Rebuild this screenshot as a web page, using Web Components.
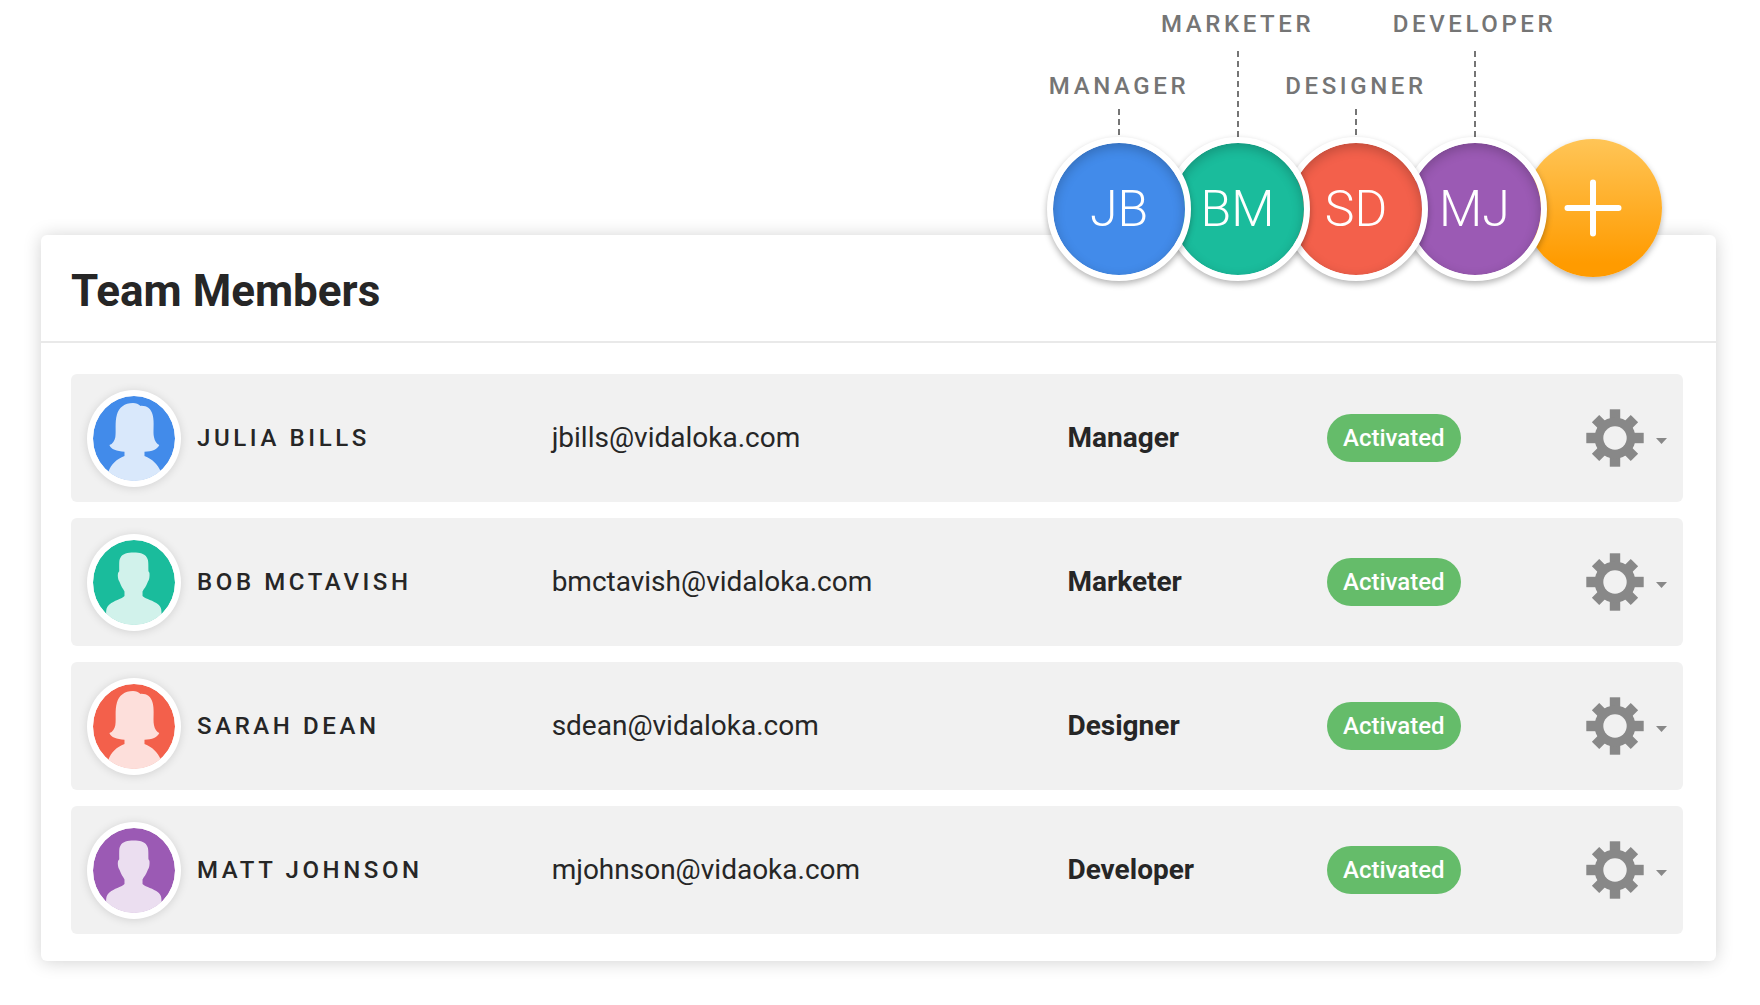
<!DOCTYPE html>
<html lang="en">
<head>
<meta charset="utf-8">
<title>Team Members</title>
<style>
  body { margin: 0; background: #fff; color: #262626; font-family: Roboto, "Liberation Sans", sans-serif; }
</style>
</head>
<body>
<team-page></team-page>

<template id="tpl-page">
  <style>
    :host { display: block; padding: 8px 44px 40px 41px; }
    header { position: relative; z-index: 1; display: flex; align-items: flex-end; justify-content: space-between; width: 592px; margin: 0 64px -46px auto; }
    role-bubble:nth-child(1) { z-index: 5; }
    role-bubble:nth-child(2) { z-index: 4; }
    role-bubble:nth-child(3) { z-index: 3; }
    role-bubble:nth-child(4) { z-index: 2; }
  </style>
  <header>
    <role-bubble initials="JB" style="--tone:#428bea">MANAGER</role-bubble>
    <role-bubble initials="BM" tall style="--tone:#1abc9c">MARKETER</role-bubble>
    <role-bubble initials="SD" style="--tone:#f3604b">DESIGNER</role-bubble>
    <role-bubble initials="MJ" tall style="--tone:#9b5ab4">DEVELOPER</role-bubble>
    <add-member></add-member>
  </header>
  <team-card>
    <span slot="title">Team Members</span>
    <team-table></team-table>
  </team-card>
</template>

<template id="tpl-bubble">
  <style>
    :host { display: flex; flex-direction: column; align-items: center; width: 118px; position: relative; }
    .label { font-size: 24px; line-height: 32px; font-weight: 500; letter-spacing: 0.15em; color: #757575; white-space: nowrap; margin-bottom: 7px; }
    .line { width: 2px; height: 28px; background: repeating-linear-gradient(#757575 0 6px, transparent 6px 10px); }
    :host([tall]) .label { margin-bottom: 11px; }
    :host([tall]) .line { height: 86px; }
    .circle { display: flex; align-items: center; justify-content: center; flex: none; box-sizing: border-box; width: 144px; height: 144px; border: 6px solid #fff; border-radius: 50%; background: var(--tone); background-clip: padding-box; color: #fff; font-size: 50px; line-height: 60px; font-weight: 300; box-shadow: 0 3px 6px rgba(0,0,0,.3), inset 0 4px 12px rgba(0,0,0,.22); }
  </style>
  <span class="label"><slot></slot></span>
  <span class="line"></span>
  <span class="circle"></span>
</template>

<template id="tpl-add">
  <style>
    :host { display: flex; justify-content: center; width: 118px; margin-bottom: 4px; }
    button { display: flex; align-items: center; justify-content: center; flex: none; width: 138px; height: 138px; padding: 0; border: 0; border-radius: 50%; background: linear-gradient(#ffc557, #ff9b00 90%); box-shadow: 0 3px 6px rgba(0,0,0,.28); cursor: pointer; }
  </style>
  <button type="button" aria-label="Add member">
    <svg width="58" height="58" viewBox="0 0 58 58" fill="none" stroke="#fff" stroke-width="6" stroke-linecap="round"><path d="M29 3.500V54.500M3.500 29H54.500"/></svg>
  </button>
</template>

<template id="tpl-card">
  <style>
    :host { display: block; background: #fff; border-radius: 6px; box-shadow: 0 1px 18px rgba(0,0,0,.18); }
    h1 { margin: 0; padding: 30px 30px 24px; font-size: 44px; line-height: 52px; font-weight: 700; border-bottom: 2px solid #e9e9e9; }
    .body { padding: 15px 33px 11px 30px; }
  </style>
  <h1><slot name="title"></slot></h1>
  <div class="body"><slot></slot></div>
</template>

<template id="tpl-table">
  <style>
    :host { display: block; }
    table { width: 100%; table-layout: fixed; border-collapse: separate; border-spacing: 0 16px; font-size: 28px; line-height: 36px; }
    .c-avatar { width: 126px; }
    .c-name { width: 22%; }
    .c-email { width: 32%; }
    .c-status { width: 259px; }
    .c-menu { width: 97px; }
    td { height: 128px; padding: 0; background: #f1f1f1; vertical-align: middle; text-align: left; white-space: nowrap; }
    td:first-child { padding-left: 16px; border-radius: 6px 0 0 6px; }
    td:last-child { border-radius: 0 6px 6px 0; }
    .name { font-size: 24px; font-weight: 500; letter-spacing: 0.15em; }
    .role { font-weight: 700; }
  </style>
  <table aria-label="Team members">
    <colgroup><col class="c-avatar"><col class="c-name"><col class="c-email"><col><col class="c-status"><col class="c-menu"></colgroup>
    <tbody></tbody>
  </table>
</template>

<template id="tpl-avatar">
  <style>
    :host { display: block; box-sizing: border-box; width: 94px; height: 97px; border: 6px solid #fff; border-radius: 50%; overflow: hidden; background: var(--tone); background-clip: padding-box; box-shadow: 0 1px 10px rgba(0,0,0,.13); }
    svg { display: block; width: 100%; height: 100%; fill: #fff; fill-opacity: .8; }
    .female, :host([kind="female"]) .male { display: none; }
    :host([kind="female"]) .female { display: inline; }
  </style>
  <svg viewBox="0 0 250 258" preserveAspectRatio="none" aria-hidden="true">
    <path class="male" d="M124 38C143 38 157 41 164 53C169 60 169 68 169 95C173 98 173 104 172 113C171 123 168 124 166 130C162 142 156 147 151 156V170C162 180 184 183 199 196C208 204 209 211 209 226V258H40V226C40 211 41 204 50 196C65 183 85 180 96 170V156C91 147 86 142 82 130C80 124 77 123 76 113C75 104 76 98 80 95C80 68 79 60 84 53C91 41 105 38 124 38Z"/>
    <path class="female" d="M122 21C131 21 139 24 145 30C164 29 177 38 182 58C188 81 182 109 186 125C188 137 195 145 202 149C197 162 180 169 157 169V182C181 192 197 206 207 230L215 258H38L47 230C55 206 72 192 96 182V169C73 168 54 162 50 149C60 145 66 136 68 125C71 106 66 80 73 56C79 35 96 21 122 21Z"/>
  </svg>
</template>

<template id="tpl-badge">
  <style>
    :host { display: inline-block; vertical-align: middle; padding: 8px 16px; border-radius: 24px; background: #65bc6a; color: #fff; font-size: 24px; line-height: 32px; font-weight: 500; }
  </style>
  <slot></slot>
</template>

<template id="tpl-menu">
  <style>
    :host { display: block; }
    button { display: flex; align-items: center; gap: 12px; padding: 0; border: 0; background: none; color: #888; cursor: pointer; }
    svg { display: block; flex: none; fill: currentColor; }
    .caret { margin-top: 5px; }
  </style>
  <button type="button" aria-haspopup="menu">
    <svg width="58" height="58" viewBox="-29 -29 58 58">
      <g><rect x="-5.200" y="-28.700" width="10.400" height="57.400"/><rect x="-28.700" y="-5.200" width="57.400" height="10.400"/>
      <g transform="rotate(45)"><rect x="-5.200" y="-27.500" width="10.400" height="55"/><rect x="-27.500" y="-5.200" width="55" height="10.400"/></g>
      <circle r="20.500"/></g>
      <circle r="11.700" fill="#f1f1f1"/>
    </svg>
    <svg class="caret" width="11" height="6" viewBox="0 0 11 6"><path d="M0 0H11L5.500 6Z"/></svg>
  </button>
</template>

<script>
  class Base extends HTMLElement {
    constructor() {
      super();
      const tpl = document.getElementById(this.constructor.template);
      this.attachShadow({ mode: "open" }).append(tpl.content.cloneNode(true));
    }
  }

  customElements.define("role-bubble", class extends Base {
    static template = "tpl-bubble";
    connectedCallback() {
      this.shadowRoot.querySelector(".circle").textContent = this.getAttribute("initials");
    }
  });
  customElements.define("add-member", class extends Base { static template = "tpl-add"; });
  customElements.define("team-card", class extends Base { static template = "tpl-card"; });
  customElements.define("user-avatar", class extends Base { static template = "tpl-avatar"; });
  customElements.define("status-badge", class extends Base { static template = "tpl-badge"; });
  customElements.define("settings-menu", class extends Base {
    static template = "tpl-menu";
    connectedCallback() {
      this.shadowRoot.querySelector("button").setAttribute("aria-label", this.getAttribute("label"));
    }
  });

  const members = [
    { name: "JULIA BILLS", email: "jbills@vidaloka.com", role: "Manager", kind: "female", tone: "#428bea" },
    { name: "BOB MCTAVISH", email: "bmctavish@vidaloka.com", role: "Marketer", kind: "male", tone: "#1abc9c" },
    { name: "SARAH DEAN", email: "sdean@vidaloka.com", role: "Designer", kind: "female", tone: "#f3604b" },
    { name: "MATT JOHNSON", email: "mjohnson@vidaoka.com", role: "Developer", kind: "male", tone: "#9b5ab4" }
  ];

  customElements.define("team-table", class extends Base {
    static template = "tpl-table";
    connectedCallback() {
      this.shadowRoot.querySelector("tbody").innerHTML = members.map(m => `
        <tr>
          <td><user-avatar kind="${m.kind}" style="--tone:${m.tone}"></user-avatar></td>
          <td class="name">${m.name}</td>
          <td>${m.email}</td>
          <td class="role">${m.role}</td>
          <td><status-badge>Activated</status-badge></td>
          <td><settings-menu label="Settings for ${m.name}"></settings-menu></td>
        </tr>`).join("");
    }
  });
  customElements.define("team-page", class extends Base { static template = "tpl-page"; });
</script>
</body>
</html>
